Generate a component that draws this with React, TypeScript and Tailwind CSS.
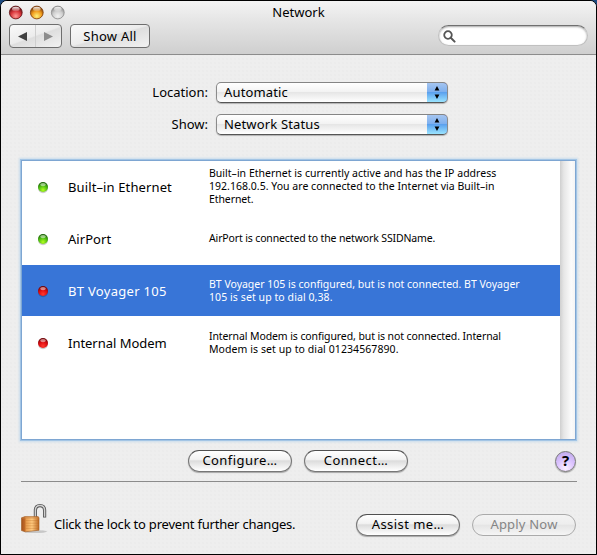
import React from 'react';

const FONT = "font-['Noto_Sans','Open_Sans',sans-serif]";

function Light({ tone }: { tone: 'red' | 'amber' | 'clear' }) {
  const c = {
    red: ['#5c0f12', '#d8353a', '#ff9a94'],
    amber: ['#7a3a06', '#f09a1c', '#fff27a'],
    clear: ['#8a8a8a', '#cfcfcf', '#f2f2f2'],
  }[tone];
  return (
    <svg width="15" height="15" viewBox="0 0 15 15">
      <defs>
        <radialGradient id={`l-${tone}`} cx="50%" cy="78%" r="72%">
          <stop offset="0" stopColor={c[2]} />
          <stop offset="0.55" stopColor={c[1]} />
          <stop offset="1" stopColor={c[0]} />
        </radialGradient>
        <linearGradient id={`g-${tone}`} x1="0" y1="0" x2="0" y2="1">
          <stop offset="0" stopColor="#fff" stopOpacity="0.9" />
          <stop offset="1" stopColor="#fff" stopOpacity="0.15" />
        </linearGradient>
      </defs>
      <circle cx="7.8" cy="7.5" r="6.4" fill={`url(#l-${tone})`} stroke={c[0]} strokeOpacity="0.8" />
      <ellipse cx="7.8" cy="4" rx="3.8" ry="2.2" fill={`url(#g-${tone})`} />
    </svg>
  );
}

function Dot({ on }: { on: boolean }) {
  const id = on ? 'dot-on' : 'dot-off';
  return (
    <svg width="14" height="14" viewBox="0 0 14 14" className="block">
      <defs>
        <radialGradient id={id} cx="50%" cy="80%" r="75%">
          <stop offset="0" stopColor={on ? '#b4ff20' : '#ff3a30'} />
          <stop offset="0.55" stopColor={on ? '#50c010' : '#dd0c10'} />
          <stop offset="1" stopColor={on ? '#1c6408' : '#700408'} />
        </radialGradient>
      </defs>
      <ellipse cx="7" cy="8.6" rx="5" ry="4.6" fill="#000" opacity="0.2" />
      <circle cx="7" cy="7" r="5" fill={`url(#${id})`} />
      <ellipse cx="7" cy="4.6" rx="2.8" ry="1.6" fill="#fff" opacity="0.5" />
    </svg>
  );
}

function Popup({ label }: { label: string }) {
  return (
    <div className="flex h-[21px] w-[232px] overflow-hidden rounded-[5px] border border-[#8b8b8b] border-t-[#858585] border-b-[#555] bg-[linear-gradient(#fff_0%,#f3f3f3_45%,#e6e6e6_50%,#fff_100%)] shadow-[0_1px_1px_rgba(0,0,0,0.25)]">
      <span className="flex-1 pl-[7px] text-[13px] leading-[19px] tracking-[0.15px]">{label}</span>
      <span className="-my-px -mr-px flex h-[21px] w-[21px] items-center justify-center rounded-r-[5px] border-t border-r border-b border-t-[#14147c] border-r-[#1c48b0] border-b-[#404a60] bg-[linear-gradient(#a5c5f0_0%,#7fb0ee_45%,#5ba1ee_50%,#9ae4ff_100%)]">
        <svg width="6" height="13" viewBox="0 0 6 13">
          <path d="M3 0 5.4 4.6H.6zM3 13 .6 8.4h4.8z" fill="#000" />
        </svg>
      </span>
    </div>
  );
}

function PushButton({ label, disabled = false }: { label: string; disabled?: boolean }) {
  return (
    <button
      className={
        'h-[22px] w-[104px] rounded-full border pb-[2px] text-center text-[13px] leading-[18px] whitespace-nowrap ' +
        (disabled
          ? 'border-[#aaa] bg-[linear-gradient(#f3f3f3_0%,#eee_45%,#e5e5e5_52%,#f5f5f5_100%)] tracking-[0.2px] text-[#858585]'
          : 'border-[#777] border-t-[#505050] bg-[linear-gradient(#fff_0%,#f2f2f2_42%,#dcdcdc_50%,#fff_100%)] tracking-[0.45px] text-black shadow-[0_1px_1px_rgba(0,0,0,0.3)]')
      }
    >
      {label}
    </button>
  );
}

function Glass() {
  return (
    <svg width="13" height="13" viewBox="0 0 13 13">
      <circle cx="5" cy="5" r="3.8" fill="none" stroke="#555" strokeWidth="1.8" />
      <path d="M7.8 7.8 11.6 11.6" stroke="#555" strokeWidth="2" strokeLinecap="round" />
    </svg>
  );
}

function Padlock() {
  return (
    <svg width="30" height="32" viewBox="0 0 30 32">
      <defs>
        <linearGradient id="brass" x1="0" y1="0" x2="1" y2="0">
          <stop offset="0" stopColor="#a4501a" />
          <stop offset="0.18" stopColor="#c06a2a" />
          <stop offset="0.24" stopColor="#e89a4c" />
          <stop offset="0.6" stopColor="#ffcb80" />
          <stop offset="1" stopColor="#bd6822" />
        </linearGradient>
      </defs>
      <ellipse cx="14" cy="28.6" rx="12" ry="1.5" fill="#000" opacity="0.16" />
      <path d="M14.4 15V7.5Q14.4 2.6 19 2.6T23.6 7.5V14.6" fill="none" stroke="#505050" strokeWidth="3.2" />
      <path d="M14.4 15V7.5Q14.4 2.6 19 2.6T23.6 7.5V13.8" fill="none" stroke="#cfcfcf" strokeWidth="1.5" />
      <path d="M0.5 14.8 4 13.6H17L18 14.4V27.2L4.4 28.8.5 27.6z" fill="url(#brass)" stroke="#a05a20" strokeWidth="0.6" />
      <path d="M4.4 15V28.4M4.6 17.6H17.6M4.6 20.2H17.6M4.6 22.8H17.6M4.6 25.4H17.6" stroke="#b3641f" strokeWidth="0.6" opacity="0.5" />
      <path d="M1 14.9H17.6" stroke="#c98345" strokeWidth="0.8" />
    </svg>
  );
}

type Line = { text: string; tracking: string };
type Row = { name: string; tracking: string; on: boolean; selected?: boolean; lines: Line[] };

const ROWS: Row[] = [
  {
    name: 'Built–in Ethernet',
    tracking: 'tracking-[0.12px]',
    on: true,
    lines: [
      { text: 'Built–in Ethernet is currently active and has the IP address', tracking: 'tracking-[0.02px]' },
      { text: '192.168.0.5. You are connected to the Internet via Built–in', tracking: 'tracking-[0.02px]' },
      { text: 'Ethernet.', tracking: 'tracking-[-0.1px]' },
    ],
  },
  {
    name: 'AirPort',
    tracking: 'tracking-[0.05px]',
    on: true,
    lines: [{ text: 'AirPort is connected to the network SSIDName.', tracking: 'tracking-[-0.14px]' }],
  },
  {
    name: 'BT Voyager 105',
    tracking: 'tracking-[0.3px]',
    on: false,
    selected: true,
    lines: [
      { text: 'BT Voyager 105 is configured, but is not connected. BT Voyager', tracking: 'tracking-[0px]' },
      { text: '105 is set up to dial 0,38.', tracking: 'tracking-[0.08px]' },
    ],
  },
  {
    name: 'Internal Modem',
    tracking: 'tracking-[-0.03px]',
    on: false,
    lines: [
      { text: 'Internal Modem is configured, but is not connected. Internal', tracking: 'tracking-[-0.1px]' },
      { text: 'Modem is set up to dial 01234567890.', tracking: 'tracking-[0.08px]' },
    ],
  },
];

export default function App() {
  return (
    <div className="h-[555px] w-[597px] bg-[linear-gradient(90deg,#1b4a80_20px,#000_20px,#000_577px,#1b4a80_577px)]">
      <div
        className={`flex h-[555px] w-[597px] flex-col overflow-hidden rounded-t-[7px] border border-black bg-[#eeeeee] bg-[radial-gradient(#e9e9e9_0.5px,transparent_1px)] bg-size-[4px_4px] text-black ${FONT}`}
      >
        <header className="h-[54px] shrink-0 border-b border-[#8c8c8c] bg-[linear-gradient(#f4f4f4,#e6e6e6_35%,#cfcfcf)]">
          <div className="grid h-[22px] grid-cols-[1fr_auto_1fr] items-center">
            <div className="flex gap-[6px] pl-[7px]">
              <Light tone="red" />
              <Light tone="amber" />
              <Light tone="clear" />
            </div>
            <h1 className="text-[13px] leading-[22px]">Network</h1>
          </div>
          <div className="flex items-start pt-px pl-2">
            <div className="flex h-6 w-[53px] rounded-[4px] border border-[#6e6e6e] bg-[linear-gradient(160deg,#fafafa_0%,#ececec_48%,#dedede_52%,#f2f2f2_100%)]">
              <span className="flex flex-1 items-center justify-center border-r border-[#cfcfcf]">
                <svg width="9" height="9" viewBox="0 0 9 9"><path d="M0 4.5 9 0V9z" fill="#404040" /></svg>
              </span>
              <span className="flex flex-1 items-center justify-center">
                <svg width="9" height="9" viewBox="0 0 9 9"><path d="M9 4.5 0 0V9z" fill="#8c8c8c" /></svg>
              </span>
            </div>
            <button className="ml-2 h-6 w-20 rounded-[4px] border border-[#6e6e6e] bg-[linear-gradient(165deg,#fafafa_0%,#ececec_48%,#dedede_52%,#f2f2f2_100%)] text-[13px] leading-[22px] tracking-[0.25px]">
              Show All
            </button>
            <div className="mt-px ml-auto mr-[8px] flex h-[21px] w-[150px] items-center rounded-full border border-[#c0c0c0] border-t-[#707070] bg-white pt-px pl-[4px] shadow-[inset_0_1px_2px_rgba(0,0,0,0.35)]">
              <Glass />
            </div>
          </div>
        </header>

        <section className="grid grid-cols-[207px_auto] gap-x-2 gap-y-[11px] pt-[27px] text-[13px] leading-[21px]">
          <span className="text-right">Location:</span>
          <Popup label="Automatic" />
          <span className="text-right">Show:</span>
          <Popup label="Network Status" />
        </section>

        <section className="mt-[25px] ml-[20px] flex h-[280px] w-[555px] shrink-0 border border-[#7ea6d2] bg-white shadow-[0_0_0_1px_#a3c5e5,0_0_2px_2px_#c9dcec]">
          <ul className="flex-1">
            {ROWS.map((row) => (
              <li
                key={row.name}
                className={
                  'flex h-[52px] items-center ' +
                  (row.selected ? 'bg-[#3875d7] bg-clip-content pb-px text-white' : '')
                }
              >
                <span className="ml-[14px] w-8">
                  <Dot on={row.on} />
                </span>
                <span className={`w-[141px] text-[13px] leading-5 ${row.tracking}`}>{row.name}</span>
                <span
                  className={
                    'text-[10.5px] leading-[13px] whitespace-nowrap ' + (row.lines.length === 2 ? 'pb-0' : 'pb-[2px]')
                  }
                >
                  {row.lines.map((line) => (
                    <span key={line.text} className={`block ${line.tracking}`}>{line.text}</span>
                  ))}
                </span>
              </li>
            ))}
          </ul>
          <div className="w-[15px] bg-[linear-gradient(90deg,#cfcfcf,#e6e6e6_25%,#fbfbfb_75%,#f4f4f4)]" />
        </section>

        <div className="mt-[10px] ml-[187px] flex items-center gap-3">
          <PushButton label="Configure…" />
          <PushButton label="Connect…" />
          <button className="mr-[20px] ml-auto h-[21px] w-[21px] rounded-full border border-[#777] bg-[radial-gradient(circle_at_50%_85%,#fbefff_0%,#dcc4ff_45%,#b9a2e6_100%)] pb-[2px] text-center text-[15px] leading-[17px] font-bold shadow-[0_1px_1px_rgba(0,0,0,0.3)]">
            ?
          </button>
        </div>

        <hr className="mt-[9px] mr-[19px] ml-[20px] border-t border-[#8c8c8c]" />

        <footer className="mt-[21px] flex items-start pl-[20px]">
          <Padlock />
          <span className="mt-[11px] ml-[3px] text-[13px] leading-5 tracking-[-0.21px] whitespace-nowrap">Click the lock to prevent further changes.</span>
          <div className="mt-[11px] mr-[20px] ml-auto flex gap-3">
            <PushButton label="Assist me…" />
            <PushButton label="Apply Now" disabled />
          </div>
        </footer>
      </div>
    </div>
  );
}
